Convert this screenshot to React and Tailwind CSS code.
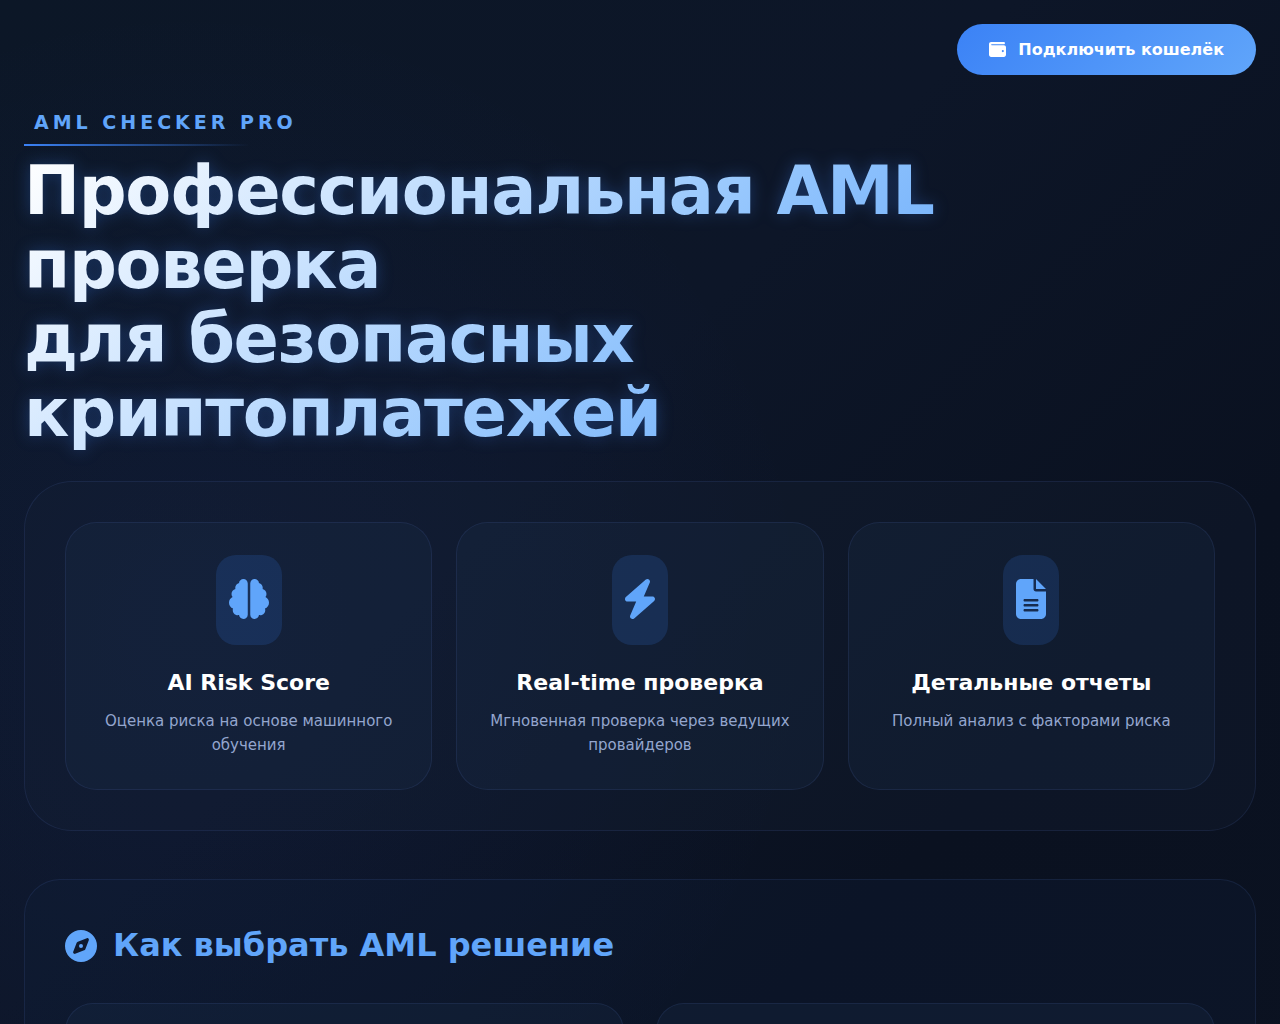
import React from 'react';
import { FaBolt, FaBrain, FaCompass, FaFileLines, FaWallet } from 'react-icons/fa6';

const features = [
    {
        id: 'score',
        icon: FaBrain,
        title: 'AI Risk Score',
        text: 'Оценка риска на основе машинного обучения',
    },
    {
        id: 'realtime',
        icon: FaBolt,
        iconClass: 'w-[30px]',
        title: 'Real-time проверка',
        text: 'Мгновенная проверка через ведущих провайдеров',
    },
    {
        id: 'reports',
        icon: FaFileLines,
        iconClass: 'w-[30px]',
        title: 'Детальные отчеты',
        text: 'Полный анализ с факторами риска',
    },
];

const FeatureCard = ({ icon: Icon, iconClass, title, text }) => (
    <article className="flex flex-col items-center rounded-[32px] border border-[#6085dc]/12 bg-[#1b2f4c]/25 p-8 text-center">
        <div className="flex h-[90px] items-center justify-center rounded-[20px] bg-[#3b82f6]/16 px-[13px] pb-0.5 text-[#60a5fa]">
            <span className={`flex justify-center ${iconClass || 'w-10'}`}>
                <Icon className="h-10 w-auto shrink-0" />
            </span>
        </div>
        <h3 className="mt-5 text-[22px] leading-9 font-bold text-white">{title}</h3>
        <p className="mt-2 text-[15px] leading-6 text-[#94a6ce]">{text}</p>
    </article>
);

const App = () => {
    return (
        <div
            className="min-h-screen bg-[#0a0f1e] bg-[radial-gradient(circle_at_15%_50%,rgba(59,90,246,0.06)_0%,transparent_50%),linear-gradient(135deg,#0c1727_0%,#0d1628_40%,#0a1120_70%,#0b1221_100%)] px-6 pt-6 pb-12 font-['DejaVu_Sans',sans-serif]"
        >
            <header className="flex justify-end">
                <button
                    type="button"
                    className="flex h-[51px] items-center gap-3 rounded-full bg-[linear-gradient(135deg,#3b82f6,#60a5fa)] px-8 text-base font-bold text-white hover:brightness-110"
                >
                    <FaWallet className="size-[17px]" />
                    Подключить кошелёк
                </button>
            </header>

            <main>
                <div className="mt-8 flex">
                    <div className="relative px-[10px] pb-2 text-[19px] leading-[31px] font-bold tracking-[4px] text-[#60a5fa]">
                        AML CHECKER PRO
                        <span className="absolute bottom-0 left-0 h-0.5 w-4/5 bg-linear-to-r from-[#3b82f6] to-transparent" />
                    </div>
                </div>

                <h1 className="mt-2 w-fit bg-[linear-gradient(135deg,#ffffff_0%,#93c5fd_65%,#60a5fa_100%)] bg-clip-text text-[67px] leading-[74px] font-bold tracking-[-0.02em] text-transparent drop-shadow-[0_0_8px_rgba(59,130,246,0.3)]">
                    Профессиональная AML
                    <br />
                    проверка
                    <br />
                    для безопасных
                    <br />
                    криптоплатежей
                </h1>

                <section className="mt-[31px] grid grid-cols-1 gap-6 rounded-[48px] border border-[#6085dc]/12 bg-[#162238]/25 p-10 md:grid-cols-3">
                    {features.map((feature) => (
                        <FeatureCard key={feature.id} {...feature} />
                    ))}
                </section>

                <section className="mt-12 rounded-[36px] border border-[#6085dc]/12 bg-[#10203a]/25 p-10">
                    <h2 className="flex items-center gap-4 text-[32px] leading-[51px] font-bold text-[#60a5fa]">
                        <FaCompass className="shrink-0" />
                        Как выбрать AML решение
                    </h2>
                    <div className="mt-8 grid grid-cols-1 gap-8 md:grid-cols-2">
                        <div className="min-h-40 rounded-[28px] border border-[#6085dc]/12 bg-[#1b2f4c]/25" />
                        <div className="min-h-40 rounded-[28px] border border-[#6085dc]/12 bg-[#1b2f4c]/25" />
                    </div>
                </section>
            </main>
        </div>
    );
};

export default App;
